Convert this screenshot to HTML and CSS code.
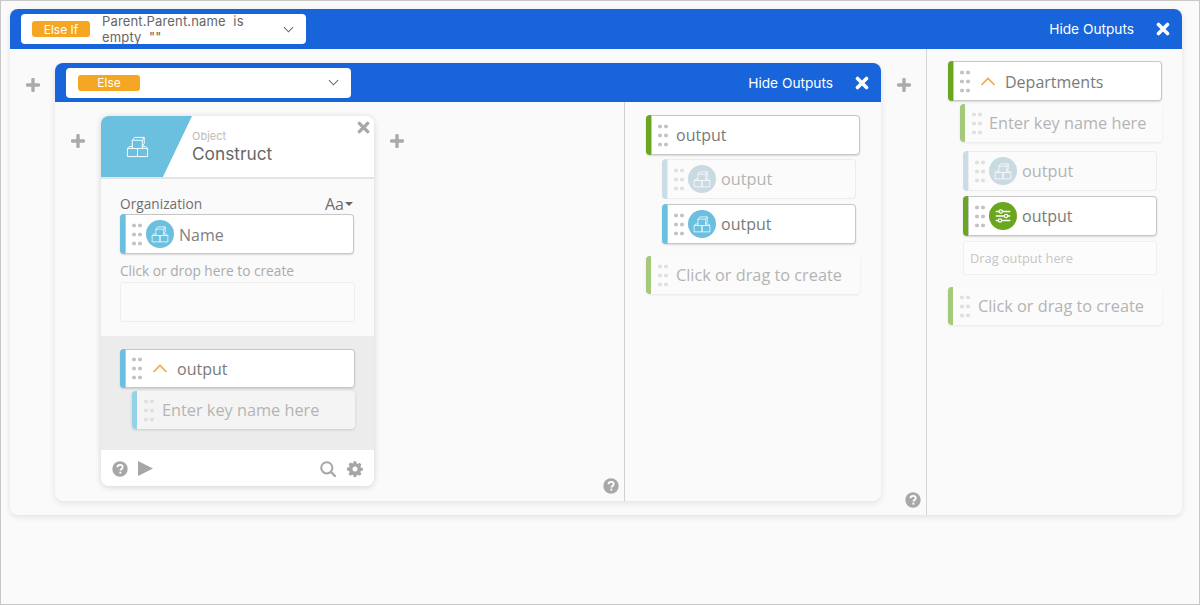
FILE: index.html
```html
<!DOCTYPE html>
<html lang="en">
<head>
<meta charset="utf-8">
<title>Flow builder</title>
<link rel="stylesheet" href="styles.css">
</head>
<body>
<svg class="defs" width="0" height="0" aria-hidden="true">
  <symbol id="cubes" viewBox="0 0 24 24">
    <path d="M1.500 14h10.500v8.500H1.500zM12 14h10.500v8.500H12zM1.500 14l2-2h3M22.500 14l-2-2h-3.500M6.500 14V5.500h10.500V14M6.500 5.500l2.500-3h10l-2 3M19 2.500V9l-2 2.500" fill="none" stroke="currentColor" stroke-width="1" stroke-linejoin="round"/>
  </symbol>
  <symbol id="sliders" viewBox="0 0 24 24">
    <path d="M3 6h18M3 12h18M3 18h18" fill="none" stroke="currentColor" stroke-width="1.800" stroke-linecap="round"/>
    <circle cx="9" cy="6" r="2.200" fill="#6aa620" stroke="currentColor" stroke-width="1.500"/>
    <circle cx="16" cy="12" r="2.200" fill="#6aa620" stroke="currentColor" stroke-width="1.500"/>
    <circle cx="8" cy="18" r="2.200" fill="#6aa620" stroke="currentColor" stroke-width="1.500"/>
  </symbol>
  <symbol id="cross" viewBox="0 0 14 14">
    <path d="M2.500 2.500l9 9M11.500 2.500l-9 9" fill="none" stroke="currentColor" stroke-width="3.600" stroke-linecap="round"/>
  </symbol>
  <symbol id="plus" viewBox="0 0 14 14">
    <path d="M7 1.500v11M1.500 7h11" fill="none" stroke="currentColor" stroke-width="3.400" stroke-linecap="round"/>
  </symbol>
  <symbol id="help" viewBox="0 0 16 16">
    <circle cx="8" cy="8" r="7.700" fill="currentColor"/>
    <path d="M5.400 6.200c.1-1.600 1.300-2.400 2.700-2.400 1.500 0 2.600.9 2.600 2.200 0 1.900-2.300 1.900-2.300 3.500" fill="none" stroke="#fff" stroke-width="1.800"/>
    <rect x="7.400" y="10.700" width="1.900" height="1.900" fill="#fff"/>
  </symbol>
  <symbol id="gear" viewBox="0 0 16 16">
    <path d="M8 .5l1.300.1.400 2 1.200.5 1.700-1.100 1.900 1.900-1.100 1.700.5 1.200 2 .4v2.600l-2 .4-.5 1.200 1.100 1.700-1.900 1.900-1.700-1.100-1.200.5-.4 2H6.700l-.4-2-1.200-.5-1.700 1.100-1.900-1.900 1.100-1.700-.5-1.200-2-.4V6.800l2-.4.5-1.200-1.100-1.700 1.900-1.900 1.700 1.100 1.200-.5.4-2z" fill="currentColor" transform="translate(0 -.2)"/>
    <circle cx="8" cy="8" r="2.500" fill="#fff"/>
  </symbol>
  <symbol id="search" viewBox="0 0 16 16">
    <circle cx="6.800" cy="6.800" r="5.600" fill="none" stroke="currentColor" stroke-width="2"/>
    <path d="M11 11l4 4" stroke="currentColor" stroke-width="2.400" stroke-linecap="round"/>
  </symbol>
</svg>

<div class="frame">
  <section class="panel outer">
    <header class="bar">
      <div class="select select-if">
        <span class="badge badge-if">Else If</span>
        <span class="select-text">Parent.Parent.name&nbsp; is empty&nbsp; ""</span>
        <svg class="chev" viewBox="0 0 12 7"><path d="M1 1l5 5 5-5" fill="none" stroke="currentColor" stroke-width="1.100"/></svg>
      </div>
      <span class="hide">Hide Outputs</span>
      <svg class="close"><use href="#cross"/></svg>
    </header>
    <div class="panel-body">
      <div class="main outer-main">
        <div class="gutter"><svg class="plus plus-outer"><use href="#plus"/></svg></div>

        <section class="panel inner">
          <header class="bar">
            <div class="select select-else">
              <span class="badge badge-else">Else</span>
              <span class="select-text"></span>
              <svg class="chev" viewBox="0 0 12 7"><path d="M1 1l5 5 5-5" fill="none" stroke="currentColor" stroke-width="1.100"/></svg>
            </div>
            <span class="hide">Hide Outputs</span>
            <svg class="close"><use href="#cross"/></svg>
          </header>
          <div class="panel-body">
            <div class="main inner-main">
              <div class="gutter-card"><svg class="plus"><use href="#plus"/></svg></div>

              <article class="card">
                <div class="card-head">
                  <div class="card-swatch"><svg class="swatch-icon"><use href="#cubes"/></svg></div>
                  <div class="card-title">
                    <span class="card-kind">Object</span>
                    <span class="card-name">Construct</span>
                  </div>
                  <svg class="card-close"><use href="#cross"/></svg>
                </div>
                <div class="card-fields">
                  <div class="field-head"><span>Organization</span><span class="aa">Aa<i class="caret"></i></span></div>
                  <div class="row row-active bar-blue row-field">
                    <i class="dots"></i>
                    <span class="disc disc-blue"><svg><use href="#cubes"/></svg></span>
                    <span class="label label-soft">Name</span>
                  </div>
                  <div class="drop-hint">Click or drop here to create</div>
                  <div class="dropbox"></div>
                </div>
                <div class="card-output">
                  <div class="row row-active bar-blue row-card">
                    <i class="dots"></i>
                    <svg class="up" viewBox="0 0 16 9"><path d="M1.500 8l6.500-6.500L14.500 8" fill="none" stroke="currentColor" stroke-width="1.600"/></svg>
                    <span class="label">output</span>
                  </div>
                  <div class="row row-key bar-paleblue">
                    <i class="dots dots-pale"></i>
                    <span class="label label-ghost">Enter key name here</span>
                  </div>
                </div>
                <div class="card-foot">
                  <svg class="foot-icon"><use href="#help"/></svg>
                  <svg class="foot-play" viewBox="0 0 15 15"><path d="M0 0l15 7.500L0 15z" fill="currentColor"/></svg>
                  <span class="foot-space"></span>
                  <svg class="foot-icon"><use href="#search"/></svg>
                  <svg class="foot-icon"><use href="#gear"/></svg>
                </div>
              </article>

              <div class="gutter-card gutter-card-right"><svg class="plus"><use href="#plus"/></svg></div>
              <svg class="help help-inner"><use href="#help"/></svg>
            </div>
            <aside class="outputs outputs-inner">
              <div class="row row-active bar-green row-top">
                <i class="dots"></i>
                <span class="label label-plain">output</span>
              </div>
              <div class="row row-faded bar-fade row-sub row-sub-first">
                <i class="dots dots-pale"></i>
                <span class="disc disc-fade"><svg><use href="#cubes"/></svg></span>
                <span class="label label-ghost">output</span>
              </div>
              <div class="row row-active bar-blue row-sub">
                <i class="dots"></i>
                <span class="disc disc-blue"><svg><use href="#cubes"/></svg></span>
                <span class="label">output</span>
              </div>
              <div class="row row-create bar-lime row-top row-create-inner">
                <i class="dots dots-pale"></i>
                <span class="label label-plain label-ghost">Click or drag to create</span>
              </div>
            </aside>
          </div>
        </section>

        <div class="gutter gutter-right">
          <svg class="plus plus-outer"><use href="#plus"/></svg>
          <svg class="help help-outer"><use href="#help"/></svg>
        </div>
      </div>
      <aside class="outputs outputs-outer">
        <div class="row row-active bar-green row-top">
          <i class="dots"></i>
          <svg class="up" viewBox="0 0 16 9"><path d="M1.500 8l6.500-6.500L14.500 8" fill="none" stroke="currentColor" stroke-width="1.600"/></svg>
          <span class="label">Departments</span>
        </div>
        <div class="row row-create bar-lime row-key-outer">
          <i class="dots dots-pale"></i>
          <span class="label label-ghost">Enter key name here</span>
        </div>
        <div class="row row-faded bar-fade row-mid row-mid-first">
          <i class="dots dots-pale"></i>
          <span class="disc disc-fade"><svg><use href="#cubes"/></svg></span>
          <span class="label label-ghost">output</span>
        </div>
        <div class="row row-active bar-green row-mid">
          <i class="dots"></i>
          <span class="disc disc-green"><svg><use href="#sliders"/></svg></span>
          <span class="label">output</span>
        </div>
        <div class="drag-slot">Drag output here</div>
        <div class="row row-create bar-lime row-top row-create-outer">
          <i class="dots dots-pale"></i>
          <span class="label label-plain label-ghost">Click or drag to create</span>
        </div>
      </aside>
    </div>
  </section>
</div>
</body>
</html>
```

FILE: styles.css
```css
* { box-sizing: border-box; }
html, body { margin: 0; padding: 0; }
body { width: 1200px; height: 605px; overflow: hidden; font-family: "Open Sans", sans-serif; color: #757575; }
.defs { position: absolute; }
.frame { width: 1200px; height: 605px; padding: 8px 17px 0 9px; background: #fafafa; border: 1px solid #c8c8c8; }

.panel { display: flex; flex-direction: column; background: #fafafa; border-radius: 8px; box-shadow: 0 2px 6px rgba(0,0,0,.1); }
.outer { width: 1172px; height: 506px; }
.inner { width: 826px; height: 438px; }
.bar { flex: none; display: flex; align-items: center; height: 40px; background: #1864db; border-radius: 8px 8px 0 0; color: #fff; padding-left: 11px; }
.inner .bar { height: 39px; }
.panel-body { flex: 1; display: flex; min-height: 0; }

.select { display: flex; align-items: center; width: 285px; height: 30px; background: #fff; border-radius: 4px; color: #666; overflow: hidden; }
.badge { flex: none; display: flex; align-items: center; justify-content: center; height: 16px; background: #f5a623; color: #fff; border-radius: 3px; font: 12px "Inter", sans-serif; }
.badge-if { width: 58px; margin-left: 11px; }
.badge-else { width: 62px; margin-left: 12px; }
.select-text { flex: 1; margin-left: 12px; font: 13px/16px "Inter", sans-serif; letter-spacing: .15px; width: 150px; padding-right: 20px; }
.chev { flex: none; width: 11px; height: 7px; margin-right: 12px; color: #666; }
.hide { margin-left: auto; font: 13.700px "Inter", sans-serif; color: #fff; }
.close { flex: none; width: 14px; height: 14px; margin: 0 12px 0 22px; color: #fff; }

.main { display: flex; }
.outer-main { width: 917px; padding-top: 14px; border-right: 1px solid #d6d6d6; }
.gutter { flex: none; width: 45px; display: flex; flex-direction: column; align-items: center; }
.plus { flex: none; width: 14px; height: 14px; color: #aaa; }
.plus-outer { margin-top: 15px; }
.gutter-right { padding-bottom: 7px; }
.plus-outer + .help { margin: auto 0 0 18px; }
.help { width: 16px; height: 16px; color: #a8a8a8; }

.inner-main { width: 570px; padding-top: 14px; border-right: 1px solid #d0d0d0; }
.gutter-card { flex: none; width: 46px; padding: 15px 0 0 16px; }
.gutter-card-right { padding-left: 16px; width: 250px; }
.help-inner { flex: none; align-self: flex-end; margin: 0 0 7px -21px; }

.card { flex: none; display: flex; flex-direction: column; width: 273px; height: 370px; background: #fafafa; border-radius: 8px; box-shadow: 0 1px 6px rgba(0,0,0,.16); overflow: hidden; }
.card-head { flex: none; display: flex; height: 63px; background: #fff; border-bottom: 2px solid #e4e4e4; position: relative; }
.card-swatch { flex: none; width: 91px; height: 61px; background: #6bbfdf; clip-path: polygon(0 0, 100% 0, 68% 100%, 0 100%); padding: 19px 0 0 25px; color: #fff; }
.swatch-icon { display: block; width: 23px; height: 23px; }
.card-title { display: flex; flex-direction: column; padding-top: 14px; }
.card-kind { font: 11px/13px "Inter", sans-serif; color: #bbb; }
.card-name { font: 17.300px/22px "Inter", sans-serif; color: #666; }
.card-close { position: absolute; top: 5px; right: 4px; width: 13px; height: 13px; color: #a8a8a8; }

.card-fields { flex: none; height: 157px; padding: 15px 19px 0 19px; }
.field-head { display: flex; justify-content: space-between; height: 20px; font-size: 13.700px; line-height: 20px; color: #6f6f6f; }
.aa { font-size: 16px; display: flex; align-items: center; margin-right: 2px; }
.caret { width: 0; height: 0; margin-left: 1px; border: 4px solid transparent; border-top: 4.500px solid #666; border-bottom: 0; }
.drop-hint { margin-top: 7px; font-size: 13.700px; line-height: 20px; color: #ababab; }
.dropbox { height: 40px; margin-top: 1px; border: 1px solid #eee; border-radius: 3px; background: #fbfbfb; }

.card-output { flex: none; height: 114px; background: #ececec; padding: 13px 0 0 19px; }
.card-foot { flex: 1; display: flex; align-items: center; padding: 1px 11px 0; background: #fff; color: #a6a6a6; }
.foot-icon { width: 16px; height: 16px; }
.foot-play { width: 15px; height: 15px; margin-left: 10px; }
.foot-space { flex: 1; }
.foot-icon + .foot-icon { margin-left: 11px; }

.row { flex: none; display: flex; align-items: center; height: 40px; border-radius: 4px; border-left: 5px solid #000; background: #fff; }
.row-active { box-shadow: 0 0 0 1px #c6c6c6 inset, 0 1px 2px rgba(0,0,0,.14); }
.row-faded { box-shadow: 0 0 0 1px #ececec inset; background: #fbfbfb; }
.row-create { box-shadow: 0 1px 3px rgba(0,0,0,.08); background: #fbfbfb; height: 38px; }
.row-key { height: 38px; width: 223px; margin: 3px 0 0 12px; background: #f4f4f4; box-shadow: 0 1px 3px rgba(0,0,0,.14); }
.row-field { width: 234px; }
.row-card { width: 235px; height: 39px; }
.bar-blue { border-left-color: #6bbfdf; }
.bar-paleblue { border-left-color: #94d2e8; }
.bar-green { border-left-color: #6aa620; }
.bar-lime { border-left-color: #a5c97a; }
.bar-fade { border-left-color: #c9dde6; }

.dots { flex: none; display: block; width: 12px; height: 27px; margin-left: 6px; background: radial-gradient(circle at center, #c4c4c4 1.700px, transparent 2.200px) 0 0 / 6px 9px; }
.dots-pale { background-image: radial-gradient(circle at center, #e0e0e0 1.700px, transparent 2.200px); }
.disc { flex: none; display: flex; align-items: center; justify-content: center; width: 28px; height: 28px; margin-left: 3px; border-radius: 50%; color: #fff; }
.disc svg { width: 18px; height: 18px; display: block; }
.disc-blue { background: #6bbfdf; }
.disc-fade { background: #c9dae2; }
.disc-green { background: #6aa620; }
.label { font-size: 16px; line-height: 20px; color: #7a7a7a; margin-left: 5px; white-space: nowrap; }
.label-soft { color: #808080; padding-top: 1px; }
.label-ghost { font-size: 16.300px; color: #b4b4b4; }
.row-key .label { margin-left: 7px; }
.row-key-outer .label { margin-left: 6px; }
.label-plain { margin-left: 7px; }
.up { flex: none; width: 16px; height: 9px; margin: 0 9px 0 9px; color: #f0a945; }
.up + .label { margin-left: 0; }
.row-top .up + .label { padding-top: 1px; }

.outputs { flex: 1; display: flex; flex-direction: column; }
.outputs-inner { padding: 13px 0 0 21px; }
.outputs-outer { padding: 12px 0 0 21px; }
.row-top { width: 214px; }
.row-sub { width: 194px; height: 40px; margin: 5px 0 0 16px; }
.row-sub-first { margin-top: 4px; }
.row-create-inner { margin-top: 12px; }
.row-key-outer { width: 202px; margin: 3px 0 0 12px; }
.row-mid { width: 194px; margin: 5px 0 0 15px; }
.row-mid-first { margin-top: 9px; }
.drag-slot { flex: none; width: 194px; height: 34px; margin: 5px 0 0 15px; padding-left: 6px; font-size: 12.800px; line-height: 32px; color: #c6c6c6; border: 1px solid #f0f0f0; border-radius: 3px; background: #fcfcfc; }
.row-create-outer { margin-top: 12px; }
```
